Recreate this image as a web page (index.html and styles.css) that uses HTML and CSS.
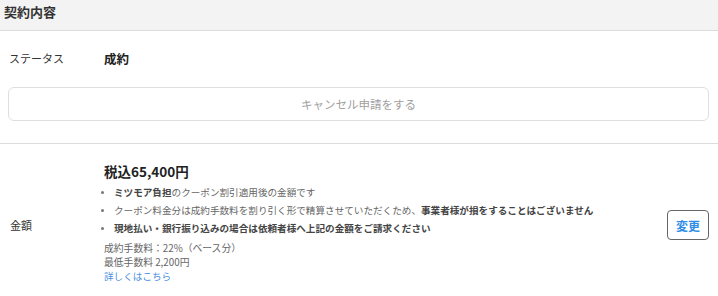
FILE: index.html
```html
<!DOCTYPE html>
<html lang="ja">
<head>
<meta charset="utf-8">
<link rel="stylesheet" href="styles.css">
</head>
<body>
<div class="page">
  <div class="header">契約内容</div>
  <div class="status-section">
    <div class="row status-row">
      <div class="label">ステータス</div>
      <div class="status-value">成約</div>
    </div>
    <button class="cancel-btn">キャンセル申請をする</button>
  </div>
  <div class="row amount-row">
    <div class="label">金額</div>
    <div class="amount-body">
      <div class="price">税込65,400円</div>
      <ul class="notes">
        <li><b>ミツモア負担</b>のクーポン割引適用後の金額です</li>
        <li>クーポン料金分は成約手数料を割り引く形で精算させていただくため、<b>事業者様が損をすることはございません</b></li>
        <li><b>現地払い・銀行振り込みの場合は依頼者様へ上記の金額をご請求ください</b></li>
      </ul>
      <div class="fee">成約手数料：22%（ベース分）</div>
      <div class="fee">最低手数料 2,200円</div>
      <a class="more" href="#">詳しくはこちら</a>
    </div>
    <button class="change-btn">変更</button>
  </div>
</div>
</body>
</html>
```
FILE: styles.css
```css
* { box-sizing: border-box; }
body {
  margin: 0;
  font-family: "Noto Sans CJK JP", "Noto Sans", sans-serif;
  color: #333;
  background: #fff;
}
.header {
  height: 31px;
  background: #f3f3f3;
  border-bottom: 1px solid #dcdcdc;
  padding: 2px 4px 0;
  font-size: 13px;
  font-weight: bold;
  line-height: 19px;
  color: #333;
}
.status-section {
  padding: 15px 9px 22px 8px;
  border-bottom: 1px solid #dcdcdc;
}
.row {
  display: flex;
  align-items: center;
}
.label {
  width: 96px;
  padding-left: 1px;
  font-size: 11px;
  color: #333;
  flex-shrink: 0;
}
.status-row {
  height: 24px;
  margin-bottom: 17px;
}
.status-value {
  font-size: 12.5px;
  font-weight: bold;
  color: #222;
}
.cancel-btn {
  display: block;
  width: 100%;
  height: 34px;
  border: 1px solid #dedede;
  border-radius: 6px;
  background: #fff;
  font-family: inherit;
  font-size: 11.5px;
  color: #a0a0a0;
  padding: 0;
}
.amount-row {
  padding: 17px 9px 19px 9px;
}
.amount-row .label {
  width: 95px;
  margin-top: 6px;
}
.amount-body {
  flex: 1;
}
.price {
  font-size: 13.5px;
  font-weight: bold;
  line-height: 20px;
  margin-bottom: 2px;
  color: #222;
}
.notes {
  list-style: none;
  margin: 0 0 4px;
  padding: 0;
  font-size: 9.6px;
  color: #666;
}
.notes li {
  position: relative;
  padding-left: 10px;
  line-height: 18px;
}
.notes li::before {
  content: "";
  position: absolute;
  left: -3px;
  top: 8px;
  width: 3px;
  height: 3px;
  border-radius: 50%;
  background: #777;
}
.notes b { color: #444; }
.fee {
  font-size: 9.8px;
  line-height: 14px;
  color: #666;
}
.more {
  display: block;
  font-size: 9.6px;
  line-height: 14px;
  color: #4a90e2;
  text-decoration: none;
}
.change-btn {
  flex-shrink: 0;
  width: 42px;
  height: 30px;
  margin-top: 6px;
  border: 1px solid #666;
  border-radius: 4px;
  background: #fff;
  font-family: inherit;
  font-size: 12px;
  font-weight: bold;
  color: #2f8ee8;
  padding: 0;
}
```
